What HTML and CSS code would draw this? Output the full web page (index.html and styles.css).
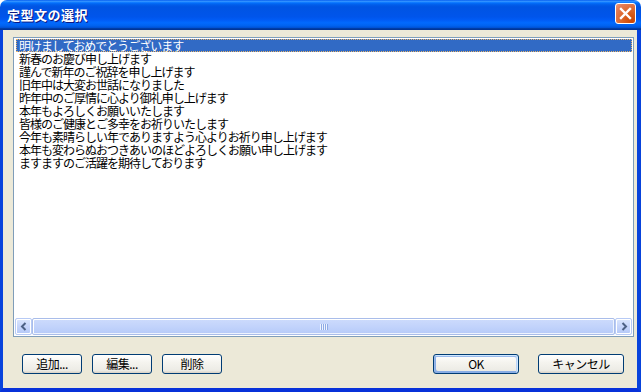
FILE: index.html
```html
<!DOCTYPE html>
<html lang="ja">
<head>
<meta charset="utf-8">
<title>定型文の選択</title>
<link rel="stylesheet" href="styles.css">
</head>
<body>
<div class="window">
  <div class="titlebar">
    <span class="title">定型文の選択</span>
    <div class="close" aria-label="閉じる">
      <svg width="21" height="21" viewBox="0 0 21 21">
        <path d="M6 6 L15 15 M15 6 L6 15" stroke="#fff" stroke-width="2.4" stroke-linecap="square" fill="none"/>
      </svg>
    </div>
  </div>
  <div class="client">
    <div class="listbox">
      <ul class="items">
        <li class="item selected">明けましておめでとうございます</li>
        <li class="item">新春のお慶び申し上げます</li>
        <li class="item">謹んで新年のご祝辞を申し上げます</li>
        <li class="item">旧年中は大変お世話になりました</li>
        <li class="item">昨年中のご厚情に心より御礼申し上げます</li>
        <li class="item">本年もよろしくお願いいたします</li>
        <li class="item">皆様のご健康とご多幸をお祈りいたします</li>
        <li class="item">今年も素晴らしい年でありますよう心よりお祈り申し上げます</li>
        <li class="item">本年も変わらぬおつきあいのほどよろしくお願い申し上げます</li>
        <li class="item">ますますのご活躍を期待しております</li>
      </ul>
      <div class="hscroll">
        <div class="sb-btn">
          <svg width="8" height="9" viewBox="0 0 8 9"><path d="M5.5 1 L2 4.5 L5.5 8" stroke="#4d6185" stroke-width="2" fill="none"/></svg>
        </div>
        <div class="thumb"><span class="grip"></span></div>
        <div class="sb-btn">
          <svg width="8" height="9" viewBox="0 0 8 9"><path d="M2.5 1 L6 4.5 L2.5 8" stroke="#4d6185" stroke-width="2" fill="none"/></svg>
        </div>
      </div>
    </div>
    <div class="buttons">
      <div class="group">
        <button class="btn small">追加...</button>
        <button class="btn small">編集...</button>
        <button class="btn small">削除</button>
      </div>
      <div class="group wide-gap">
        <button class="btn large default">OK</button>
        <button class="btn large">キャンセル</button>
      </div>
    </div>
  </div>
</div>
</body>
</html>
```

FILE: styles.css
```css
html, body {
  margin: 0;
  padding: 0;
  background: #fff;
}

.window {
  width: 641px;
  height: 392px;
  box-sizing: border-box;
  display: flex;
  flex-direction: column;
  font-family: "Noto Sans CJK JP", "Liberation Sans", sans-serif;
  font-size: 12px;
}

.titlebar {
  height: 30px;
  flex: none;
  display: flex;
  align-items: center;
  padding: 0 5px 0 7px;
  border-radius: 7px 7px 0 0;
  background: linear-gradient(180deg, #0058ee 0%, #3593ff 4%, #288eff 6%, #127dff 8%, #036ffc 10%, #0262ee 14%, #0057e5 20%, #0054e3 24%, #0055eb 56%, #005bf5 66%, #026afe 76%, #0062ef 86%, #0052d6 92%, #0040ab 94%, #003092 100%);
}

.title {
  color: #fff;
  font-weight: bold;
  font-size: 13px;
  letter-spacing: 0.5px;
  text-shadow: 1px 1px 0 #0a1883;
  line-height: 16px;
  margin-top: -1px;
}

.close {
  margin-left: auto;
  width: 21px;
  height: 21px;
  box-sizing: border-box;
  border: 1px solid #fff;
  border-radius: 3px;
  background: radial-gradient(circle at 85% 90%, #cc4600 0%, #dc6527 45%, #e37d59 80%, #ec9b7f 100%);
  display: flex;
  align-items: center;
  justify-content: center;
  margin-top: -3px;
}

.close svg {
  margin: -1px;
}

.client {
  flex: 1;
  background: #ece9d8;
  border-left: 3px solid #0843dc;
  border-right: 4px solid #0843dc;
  border-bottom: 4px solid #0831d9;
  display: flex;
  flex-direction: column;
  min-height: 0;
}

.listbox {
  margin: 7px 3px 0 10px;
  height: 300px;
  box-sizing: border-box;
  border: 1px solid #7f9db9;
  background: #fff;
  padding: 1px 1px 0 2px;
  display: flex;
  flex-direction: column;
}

.items {
  list-style: none;
  margin: 0;
  padding: 0;
  flex: 1;
}

.item {
  height: 13px;
  line-height: 13px;
  padding-left: 3px;
  letter-spacing: -1px;
  white-space: nowrap;
  color: #000;
  box-sizing: border-box;
}

.item.selected {
  background: #316ac5;
  color: #fff;
  outline: 1px dotted #e8b46a;
  outline-offset: -1px;
}

.hscroll {
  height: 17px;
  flex: none;
  display: flex;
  margin-left: -1px;
  margin-bottom: 1px;
  background: #fefefe;
}

.sb-btn {
  width: 17px;
  height: 17px;
  flex: none;
  box-sizing: border-box;
  border: 1px solid #b7caf5;
  border-radius: 2px;
  background: linear-gradient(180deg, #dbe6fd 0%, #c6d5fb 50%, #b4c8f7 100%);
  box-shadow: inset 1px 1px 0 #fff, inset -1px -1px 0 #fff;
  display: flex;
  align-items: center;
  justify-content: center;
}

.thumb {
  flex: 1;
  margin: 0 0;
  box-sizing: border-box;
  border: 1px solid #a9bdea;
  border-radius: 2px;
  background: linear-gradient(180deg, #cddbfc 0%, #c2d3fb 50%, #b6caf8 100%);
  box-shadow: inset 1px 1px 0 #fff, inset -1px -1px 0 #eef3fe;
  display: flex;
  align-items: center;
  justify-content: center;
}

.grip {
  width: 8px;
  height: 6px;
  background: repeating-linear-gradient(90deg, #eef4fe 0 1px, #8faae6 1px 2px);
}

.buttons {
  display: flex;
  justify-content: space-between;
  margin: 17px 13px 0 19px;
}

.group {
  display: flex;
  gap: 10px;
}

.group.wide-gap {
  gap: 19px;
}

.btn {
  height: 20px;
  box-sizing: border-box;
  border: 1px solid #003c74;
  border-radius: 3px;
  background: linear-gradient(180deg, #ffffff 0%, #f5f4ef 40%, #ecebe5 86%, #d8d0c4 100%);
  font-family: "Noto Sans CJK JP", "Liberation Sans", sans-serif;
  font-size: 12px;
  line-height: 16px;
  color: #000;
  padding: 0;
  letter-spacing: -0.5px;
}

.btn.small {
  width: 60px;
}

.btn.large {
  width: 86px;
}

.btn.default {
  box-shadow: inset -1px 1px #cee7ff, inset 1px 2px #98b8ea, inset -2px 2px #bcd4f6, inset 1px -1px #89ade4, inset 2px -2px #89ade4;
}
```
